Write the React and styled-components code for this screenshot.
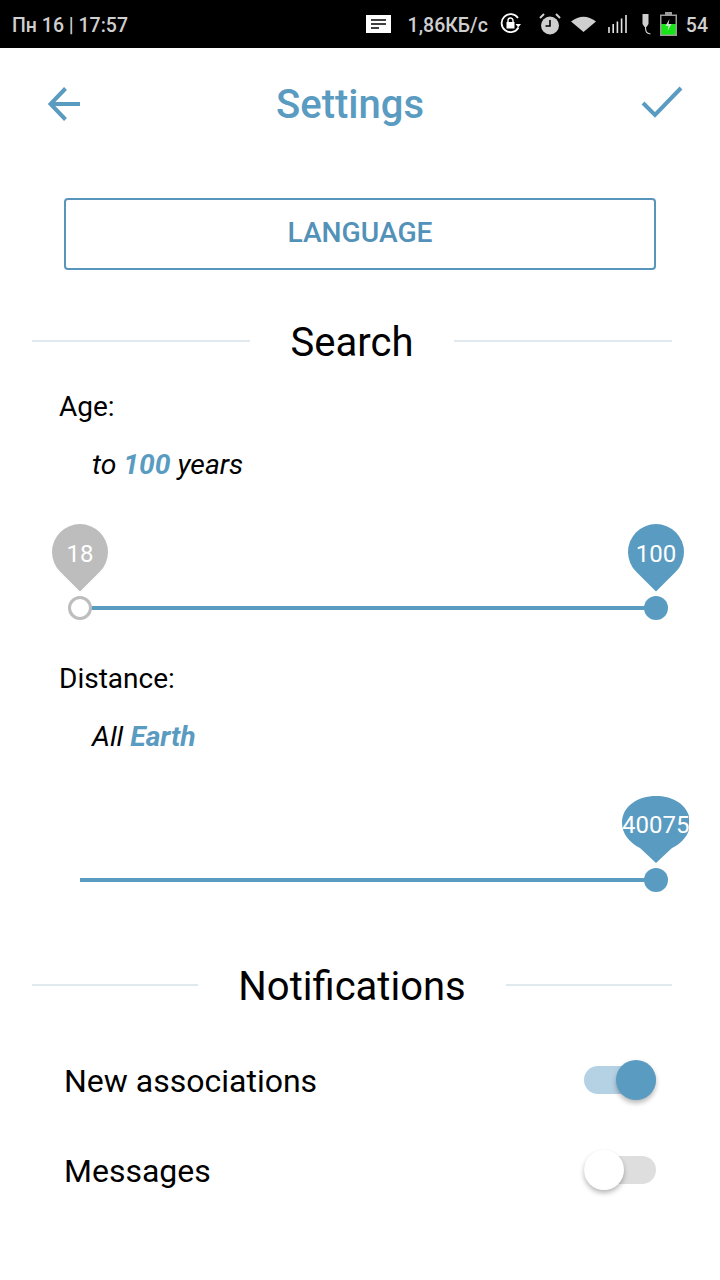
import React from 'react';
import styled, { createGlobalStyle } from 'styled-components';

const BLUE = '#5a9bc1';

const GlobalStyle = createGlobalStyle`
    html, body {
        margin: 0;
        padding: 0;
        background: #fff;
    }
    body {
        font-family: Roboto, "Liberation Sans", sans-serif;
    }
`;

const Page = styled.div`
    width: 720px;
    height: 1280px;
    background: #fff;
    overflow: hidden;
    color: #000;
`;

const StatusBar = styled.div`
    height: 48px;
    background: #000;
    color: #cfcfcf;
    display: flex;
    align-items: center;
    padding: 0 12px;
    font-size: 19.5px;
    font-weight: 500;
    box-sizing: border-box;
`;

const StatusClock = styled.span`
    flex: 1;
    padding-top: 2px;
`;

const StatusIcon = styled.svg`
    display: block;
    flex: none;
    margin-left: ${(p) => p.$gap || 0}px;
`;

const StatusText = styled.span`
    margin-left: ${(p) => p.$gap || 0}px;
    padding-top: 2px;
`;

const Header = styled.div`
    height: 112px;
    display: grid;
    grid-template-columns: 80px 1fr 100px;
    align-items: center;
`;

const BackSlot = styled.div`
    display: flex;
    justify-content: flex-end;
`;

const CheckSlot = styled.div`
    padding-left: 21px;
`;

const Title = styled.div`
    text-align: center;
    font-size: 40px;
    font-weight: 500;
    color: ${BLUE};
`;

const LanguageButton = styled.div`
    box-sizing: border-box;
    margin: 38px 64px 0;
    height: 72px;
    border: 2px solid #5795bb;
    border-radius: 4px;
    display: flex;
    align-items: center;
    justify-content: center;
    padding-bottom: 4px;
    color: #5291b8;
    font-size: 28.2px;
    font-weight: 500;
`;

const Divider = styled.div`
    display: flex;
    align-items: center;
    height: 48px;
    margin: ${(p) => p.$top}px 48px 0 32px;
`;

const DividerLine = styled.div`
    flex: 1;
    height: 2px;
    background: #e0e9ee;
`;

const DividerText = styled.div`
    margin: 0 40.5px;
    padding-top: 2px;
    font-size: 40px;
`;

const FilterGroup = styled.div`
    height: 272px;
    margin-top: ${(p) => p.$top || 0}px;
`;

const Label = styled.div`
    padding-left: 59px;
    font-size: 28px;
    line-height: 34px;
`;

const ValueText = styled.div`
    margin-top: 25px;
    padding-left: 92px;
    font-size: 28.3px;
    line-height: 32px;
    font-style: italic;
`;

const Strong = styled.b`
    font-weight: 700;
    color: ${BLUE};
`;

const Slider = styled.div`
    position: relative;
    height: 181px;
`;

const Track = styled.div`
    position: absolute;
    left: 80px;
    width: 576px;
    top: 125px;
    height: 4px;
    background: ${BLUE};
`;

const Thumb = styled.div`
    position: absolute;
    box-sizing: border-box;
    left: ${(p) => p.$x - 12}px;
    top: 115px;
    width: 24px;
    height: 24px;
    border-radius: 50%;
    background: ${(p) => (p.$hollow ? '#fff' : BLUE)};
    border: ${(p) => (p.$hollow ? '3px solid #bdbdbd' : 'none')};
`;

const Pin = styled.div`
    position: absolute;
    box-sizing: border-box;
    left: ${(p) => p.$x - 28}px;
    top: 43px;
    width: 56px;
    height: 56px;
    padding-top: 4px;
    display: flex;
    align-items: center;
    justify-content: center;
    color: #fff;
    font-size: 24px;
    &::before {
        content: '';
        position: absolute;
        inset: 0;
        background: ${(p) => p.$color};
        border-radius: 50% 50% 0 50%;
        transform: rotate(45deg);
    }
`;

const PinText = styled.span`
    position: relative;
`;

const WidePin = styled.div`
    position: absolute;
    left: 622px;
    top: 43px;
    width: 67px;
    height: 67px;
    overflow: hidden;
    color: #fff;
    font-size: 24px;
`;

const WidePinShape = styled.svg`
    position: absolute;
    left: 0;
    top: 0;
`;

const WidePinText = styled.span`
    position: absolute;
    left: 0;
    top: 15px;
    line-height: 28px;
`;

const ToggleRow = styled.div`
    display: flex;
    align-items: center;
    justify-content: space-between;
    height: 90px;
    margin-top: ${(p) => p.$top || 0}px;
    padding: 0 64px;
    font-size: 32px;
`;

const Toggle = styled.div`
    position: relative;
    width: 72px;
    height: 28px;
    margin-bottom: 2px;
    border-radius: 14px;
    background: ${(p) => (p.$on ? '#b5d2e5' : '#dedede')};
`;

const ToggleKnob = styled.div`
    position: absolute;
    top: -6px;
    left: ${(p) => (p.$on ? '32px' : '0')};
    width: 40px;
    height: 40px;
    border-radius: 50%;
    background: ${(p) => (p.$on ? BLUE : '#fff')};
    box-shadow: 0 3px 5px rgba(0, 0, 0, 0.28);
`;

function StatusIcons() {
    return (
        <>
            <StatusIcon width="25" height="18" viewBox="0 0 25 18">
                <rect width="25" height="18" fill="#fff" />
                <path d="M5 5h15M5 9h15M5 13h8" stroke="#000" strokeWidth="1.6" />
            </StatusIcon>
            <StatusText $gap={17}>1,86КБ/с</StatusText>
            <StatusIcon $gap={12} width="22" height="22" viewBox="0 0 22 22">
                <path d="M18.500 14.500A9 9 0 1 1 18 5" fill="none" stroke="#fff" strokeWidth="1.800" />
                <path d="M15.500 11l5.500 0-2.750 3.500z" fill="#fff" />
                <rect x="6.500" y="9" width="8" height="6.500" fill="#fff" />
                <path d="M8 9V7.500a2.500 2.500 0 0 1 5 0V9" fill="none" stroke="#fff" strokeWidth="1.400" />
            </StatusIcon>
            <StatusIcon $gap={17} width="22" height="22" viewBox="0 0 22 22">
                <circle cx="11" cy="12.500" r="9" fill="#cfcfcf" />
                <path d="M11 7v6H6.500" fill="none" stroke="#000" strokeWidth="1.600" />
                <path d="M1 5l4-4M21 5l-4-4" stroke="#cfcfcf" strokeWidth="2" />
            </StatusIcon>
            <StatusIcon $gap={10} width="25" height="18" viewBox="0 0 25 18">
                <path d="M0 6.500Q12.500-3 25 6.500L12.500 17z" fill="#cfcfcf" />
            </StatusIcon>
            <StatusIcon $gap={12} width="20" height="20" viewBox="0 0 20 20">
                <path d="M1 13v6M5.200 10v9M9.400 7.500V19M13.600 4.500V19M18 1v18" stroke="#e4e4e4" strokeWidth="1.600" />
            </StatusIcon>
            <StatusIcon $gap={13} width="10" height="22" viewBox="0 0 10 22">
                <path d="M1.500 1h6v10l-2 3h-2l-2-3z" fill="#cfcfcf" />
                <path d="M4.500 14c0 5 1 6.500 5 7" fill="none" stroke="#cfcfcf" strokeWidth="1.200" />
            </StatusIcon>
            <StatusIcon $gap={9} width="17" height="24" viewBox="0 0 17 24">
                <path d="M5 0h7v2.500h5V24H0V2.500h5z" fill="#9d9d9d" />
                <rect x="1.500" y="4" width="14" height="8" fill="#000" />
                <rect x="1.500" y="12" width="14" height="10.500" fill="#16e516" />
                <path d="M9.500 7L5.500 14h3l-1 5 4-7h-3z" fill="#d8d8d8" />
            </StatusIcon>
            <StatusText $gap={9}>54</StatusText>
        </>
    );
}

function App() {
    return (
        <Page>
            <GlobalStyle />
            <StatusBar>
                <StatusClock>Пн 16 | 17:57</StatusClock>
                <StatusIcons />
            </StatusBar>

            <Header>
                <BackSlot>
                    <svg width="32" height="34" viewBox="0 0 32 34">
                        <path d="M32 17H2.500M17.500 1.500L2.500 17l15 15.500" fill="none" stroke={BLUE} strokeWidth="4" />
                    </svg>
                </BackSlot>
                <Title>Settings</Title>
                <CheckSlot>
                    <svg width="42" height="34" viewBox="0 0 42 34">
                        <path d="M2 18l12 12L40 3" fill="none" stroke={BLUE} strokeWidth="4" />
                    </svg>
                </CheckSlot>
            </Header>

            <LanguageButton>LANGUAGE</LanguageButton>

            <Divider $top={47}>
                <DividerLine />
                <DividerText>Search</DividerText>
                <DividerLine />
            </Divider>

            <FilterGroup $top={25}>
                <Label>Age:</Label>
                <ValueText>
                    to <Strong>100</Strong> years
                </ValueText>
                <Slider>
                    <Track />
                    <Pin $x={80} $color="#bdbdbd">
                        <PinText>18</PinText>
                    </Pin>
                    <Pin $x={656} $color={BLUE}>
                        <PinText>100</PinText>
                    </Pin>
                    <Thumb $x={80} $hollow />
                    <Thumb $x={656} />
                </Slider>
            </FilterGroup>

            <FilterGroup>
                <Label>Distance:</Label>
                <ValueText>
                    All <Strong>Earth</Strong>
                </ValueText>
                <Slider>
                    <Track />
                    <WidePin>
                        <WidePinShape width="68" height="67" viewBox="0 0 68 67">
                            <path d="M34 67L18 52C8 47 0 38 0 27C0 10 16 0 34 0C52 0 68 10 68 27C68 38 60 47 50 52Z" fill={BLUE} />
                        </WidePinShape>
                        <WidePinText>40075</WidePinText>
                    </WidePin>
                    <Thumb $x={656} />
                </Slider>
            </FilterGroup>

            <Divider $top={27}>
                <DividerLine />
                <DividerText>Notifications</DividerText>
                <DividerLine />
            </Divider>

            <ToggleRow $top={27}>
                New associations
                <Toggle $on>
                    <ToggleKnob $on />
                </Toggle>
            </ToggleRow>
            <ToggleRow>
                Messages
                <Toggle>
                    <ToggleKnob />
                </Toggle>
            </ToggleRow>
        </Page>
    );
}

export default App;
